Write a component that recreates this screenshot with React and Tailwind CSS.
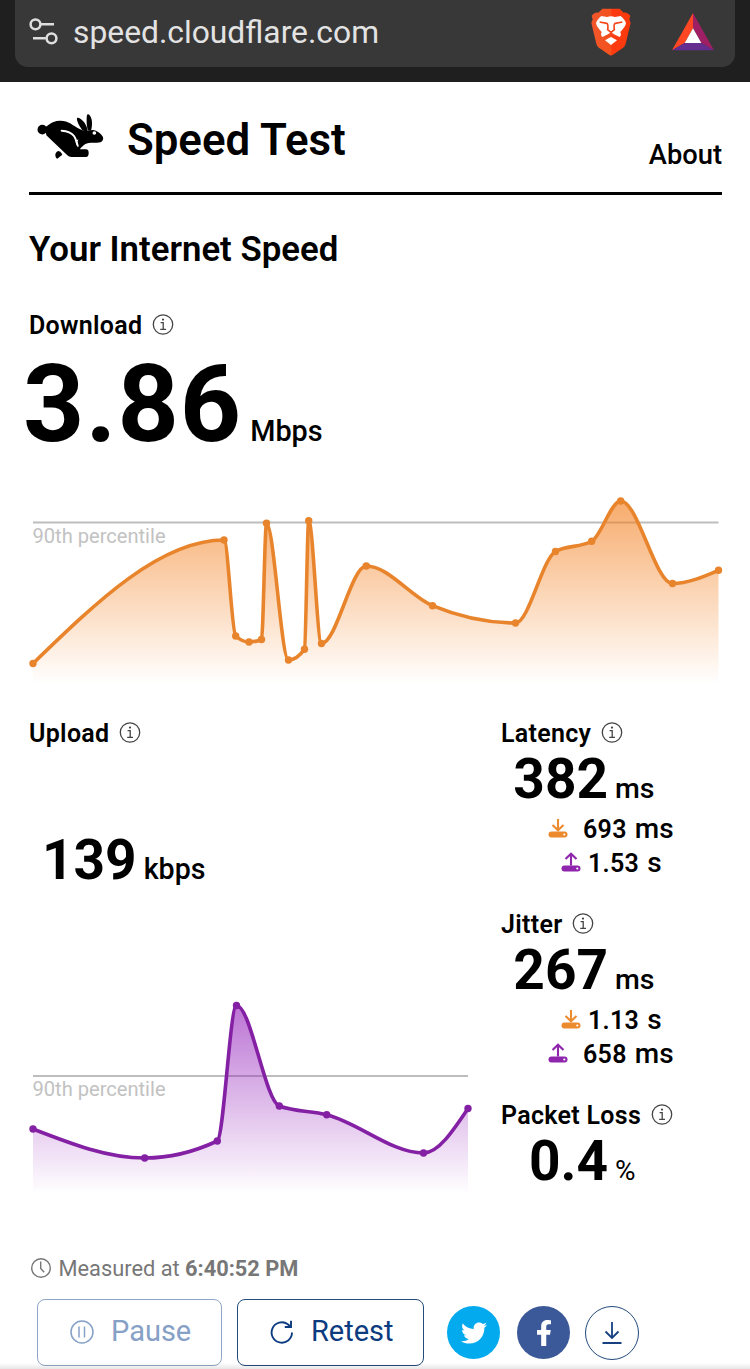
import React from "react";
import { FaFacebookF, FaTwitter } from "react-icons/fa";

const downloadPoints = [
  [33, 183.5],
  [224, 60],
  [235.7, 156],
  [249, 162],
  [261.5, 159.5],
  [266.5, 43.3],
  [288.5, 180],
  [304.5, 169.3],
  [308.7, 40.7],
  [321.5, 163.5],
  [366.3, 86],
  [432.5, 125.7],
  [515.5, 143],
  [555.5, 71.5],
  [591.7, 61.3],
  [620.7, 21],
  [672.5, 103.5],
  [718.5, 90.3],
];

const uploadPoints = [
  [33, 139],
  [144.7, 168],
  [217.3, 151],
  [236.5, 15.5],
  [279.3, 116],
  [326.7, 124.7],
  [423.5, 163],
  [468, 118.5],
];

// Monotone cubic interpolation, keeps the peaks at the data points
const monotonePath = (points) => {
  const n = points.length;
  const slopes = [];
  for (let i = 0; i < n - 1; i++) {
    slopes.push(
      (points[i + 1][1] - points[i][1]) / (points[i + 1][0] - points[i][0])
    );
  }

  const tangents = new Array(n).fill(0);
  for (let i = 1; i < n - 1; i++) {
    const h0 = points[i][0] - points[i - 1][0];
    const h1 = points[i + 1][0] - points[i][0];
    const s0 = slopes[i - 1];
    const s1 = slopes[i];
    const p = (s0 * h1 + s1 * h0) / (h0 + h1);
    tangents[i] =
      (Math.sign(s0) + Math.sign(s1)) *
      Math.min(Math.abs(s0), Math.abs(s1), 0.5 * Math.abs(p));
  }
  tangents[0] = (3 * slopes[0] - tangents[1]) / 2;
  tangents[n - 1] = (3 * slopes[n - 2] - tangents[n - 2]) / 2;

  let d = `M${points[0][0]},${points[0][1]}`;
  for (let i = 0; i < n - 1; i++) {
    const [x0, y0] = points[i];
    const [x1, y1] = points[i + 1];
    const dx = (x1 - x0) / 3;
    d += `C${x0 + dx},${y0 + dx * tangents[i]} ${x1 - dx},${
      y1 - dx * tangents[i + 1]
    } ${x1},${y1}`;
  }
  return d;
};

const SpeedChart = ({ id, points, width, color, fill, top, percentile }) => {
  const line = monotonePath(points);
  const first = points[0][0];
  const last = points[points.length - 1][0];

  return (
    <svg
      width={width}
      height="210"
      viewBox={`29 0 ${width} 210`}
      className="block overflow-visible"
    >
      <defs>
        <linearGradient
          id={id}
          gradientUnits="userSpaceOnUse"
          x1="0"
          y1={top}
          x2="0"
          y2="204"
        >
          <stop offset="0" stopColor={fill} stopOpacity="0.66" />
          <stop offset="1" stopColor={fill} stopOpacity="0" />
        </linearGradient>
      </defs>
      <line
        x1={first}
        x2={last}
        y1={percentile}
        y2={percentile}
        stroke="#bdbdbd"
        strokeWidth="2"
      />
      <text
        x="32.5"
        y={percentile + 20}
        fill="#c2c2c2"
        className="text-[20.1px]"
      >
        90th percentile
      </text>
      <path d={`${line}L${last},204L${first},204Z`} fill={`url(#${id})`} />
      <path
        d={line}
        fill="none"
        stroke={color}
        strokeWidth="3.6"
        strokeLinejoin="round"
      />
      {points.map(([x, y]) => (
        <circle key={x} cx={x} cy={y} r="3.7" fill={color} />
      ))}
    </svg>
  );
};

const InfoIcon = () => (
  <svg
    width="22"
    height="22"
    viewBox="0 0.5 22 22"
    fill="none"
    stroke="#444"
    className="overflow-visible"
  >
    <circle cx="11" cy="11" r="9.7" strokeWidth="1.3" />
    <path d="M8.6 9.2h2.6v6.6M8.2 15.9h5.8" strokeWidth="1.3" />
    <circle cx="11" cy="6.1" r="1.1" fill="#444" stroke="none" />
  </svg>
);

const TransferIcon = ({ direction }) => {
  const color = direction === "down" ? "#ec8a2e" : "#8f24ad";
  return (
    <svg
      width="20"
      height="20"
      viewBox="0 0.5 20 20"
      fill="none"
      stroke={color}
      className="overflow-visible"
    >
      <path
        d={
          direction === "down"
            ? "M10 0.5v11M4.5 6.5l5.5 5.3 5.5-5.3"
            : "M10 13V1.5M4.5 6.6L10 1.2l5.5 5.4"
        }
        strokeWidth="2.1"
      />
      <rect x="0.5" y="13" width="19" height="6" rx="3" fill={color} stroke="none" />
      <circle cx="16.3" cy="16" r="1.1" fill="#fff" stroke="none" />
    </svg>
  );
};

const RabbitLogo = () => (
  <svg width="68" height="48" viewBox="36 25 204 144">
    <circle cx="52" cy="75" r="14.5" />
    <path d="M60 68C72 62 78 49 104 48C130 47 143 62 164 73L176 78L205 76C216 79 224 84 229 90C235 96 236 102 233 107C230 113 224 114 216 114L198 114C188 114 181 117 176 122L167 130L165 134L184 134C190 135 191 140 191 146C191 153 188 157 183 157L140 157C133 157 129 154 123 148L64 92Z" />
    <path d="M156 40C161 38 168 43 174 49C180 55 187 67 187 76C187 82 175 82 170 74C164 65 154 49 156 40Z" />
    <path d="M188 29C193 27 198 36 200 45C202 55 201 67 198 78L188 76C186 66 184 53 185 43C185 36 186 30 188 29Z" />
    <path d="M100 139L106 141C112 148 113 149 110 152L97 162C93 162 91 155 91 151C91 145 95 141 100 139Z" />
    <path
      d="M110 78C129 79 139 83 147 94C154 104 153 111 158 122"
      fill="none"
      stroke="#fff"
      strokeWidth="6"
      strokeLinecap="round"
    />
    <path
      d="M158 106C155 113 155 119 159 126"
      fill="none"
      stroke="#fff"
      strokeWidth="3"
      strokeLinecap="round"
    />
    <circle cx="208" cy="85" r="5.5" fill="#fff" />
  </svg>
);

const BraveLogo = () => (
  <svg width="40" height="48" viewBox="94 22 120 144">
    <defs>
      <linearGradient id="brave" x1="0" x2="1" y1="0" y2="0">
        <stop offset="0" stopColor="#f1562b" />
        <stop offset="0.5" stopColor="#f4511e" />
        <stop offset="0.52" stopColor="#ff3a12" />
        <stop offset="1" stopColor="#f93a0c" />
      </linearGradient>
    </defs>
    <path
      d="M128 24H180L192 36C198 34 204 36 212 45L209 56L213 67L198 129C196 136 193 139 188 143L160 162C156 165 152 165 148 162L120 143C115 139 112 136 110 129L95 67L99 56L96 45C104 36 110 34 116 36Z"
      fill="url(#brave)"
    />
    <path
      d="M125 46L142 49C150 46 158 46 166 49L183 46C190 52 196 59 199 67C198 75 193 82 182 94C185 101 184 106 180 109L167 103L156 96L154 95L152 96L141 103L128 109C124 106 123 101 126 94C115 82 110 75 109 67C112 59 118 52 125 46Z"
      fill="#fff"
    />
    <path d="M136 119L154 109L172 119L154 133Z" fill="#fff" />
    <path
      d="M120 64L141 68C147 71 145 79 144 87L154 95L164 87C163 79 161 71 167 68L188 64"
      fill="none"
      stroke="#f4471d"
      strokeWidth="5"
    />
    <path
      d="M154 93V102M137 108L154 101L171 108"
      fill="none"
      stroke="#f4471d"
      strokeWidth="4"
    />
  </svg>
);

const BatLogo = () => (
  <svg width="42" height="38" viewBox="0 0 126 114">
    <path d="M63 0L0 112L38 90L63 46Z" fill="#ff4724" />
    <path d="M63 0L126 112L88 90L63 46Z" fill="#9e1f63" />
    <path d="M0 112H126L88 90H38Z" fill="#662d91" />
    <path d="M63 46L88 90H38Z" fill="#fff" />
  </svg>
);

const SectionTitle = ({ title }) => (
  <div className="flex h-6 items-center gap-[9.5px] text-[25px] font-semibold">
    <span className="pt-[2px] tracking-[0.3px]">{title}</span>
    <InfoIcon />
  </div>
);

const metrics = [
  {
    title: "Latency",
    value: "382",
    unit: "ms",
    loaded: [
      { direction: "down", value: "693", unit: "ms" },
      { direction: "up", value: "1.53", unit: "s" },
    ],
  },
  {
    title: "Jitter",
    value: "267",
    unit: "ms",
    loaded: [
      { direction: "down", value: "1.13", unit: "s" },
      { direction: "up", value: "658", unit: "ms" },
    ],
  },
  { title: "Packet Loss", value: "0.4", unit: "%", loaded: [] },
];

const Metric = ({ metric }) => (
  <div className="h-[159px]">
    <SectionTitle title={metric.title} />
    <div className="mt-[6px] flex h-[56px] items-baseline leading-[56px]">
      <span className="w-[107px] text-right text-[55px] font-bold">
        {metric.value}
      </span>
      <span
        className={
          metric.unit === "%"
            ? "ml-[7px] text-[28px]"
            : "ml-[7px] text-[28.5px] font-medium"
        }
      >
        {metric.unit}
      </span>
    </div>
    <div className="mt-[5px]">
      {metric.loaded.map((item) => (
        <div
          key={item.direction}
          className={`flex h-[34px] items-center ${
            item.unit === "s" ? "pl-[60px]" : "pl-[47px]"
          }`}
        >
          <TransferIcon direction={item.direction} />
          <div
            className={`flex h-[34px] items-baseline gap-[8px] leading-[34px] ${
              item.unit === "s" ? "pl-[7px]" : "pl-[15px]"
            }`}
          >
            <span className="text-[25px] font-semibold tracking-[0.3px]">
              {item.value}
            </span>
            <span className="text-[28px] font-medium">{item.unit}</span>
          </div>
        </div>
      ))}
    </div>
  </div>
);

const App = () => {
  return (
    <div className="relative h-[1369px] w-[750px] overflow-hidden bg-white font-['Roboto',sans-serif] text-black">
      {/* Browser bar */}
      <div className="h-[82px] bg-[#1f1f1f] px-[15px]">
        <div className="flex h-[67px] items-center rounded-b-[13px] bg-[#383838] pr-[21px] pb-[4px] pl-[14px]">
          <svg
            width="30"
            height="28"
            viewBox="0 0 30 28"
            fill="none"
            stroke="#dedede"
            strokeWidth="2.5"
          >
            <circle cx="6.5" cy="6.3" r="4.9" />
            <path d="M11.4 6.3H25M4 20.3h12.8" />
            <circle cx="22.5" cy="20.3" r="4.9" />
          </svg>
          <span className="ml-[14px] grow text-[31.8px] leading-[40px] text-[#e3e3e3]">
            speed.cloudflare.com
          </span>
          <BraveLogo />
          <div className="ml-[41px]">
            <BatLogo />
          </div>
        </div>
      </div>

      <main className="pr-[28px] pl-[29px]">
        {/* Header */}
        <header className="flex h-[113px] items-center border-b-[3.5px] border-black">
          <div className="ml-[8px]">
            <RabbitLogo />
          </div>
          <h1 className="ml-[22px] grow pt-[6px] text-[43.8px] leading-[50px] font-semibold">
            Speed Test
          </h1>
          <span className="pt-[35px] text-[27.3px] leading-[32px] font-medium">
            About
          </span>
        </header>

        {/* Download */}
        <h2 className="mt-[37px] text-[34.8px] leading-[34px] font-semibold">
          Your Internet Speed
        </h2>
        <div className="mt-[47px]">
          <SectionTitle title="Download" />
        </div>
        <div className="-ml-[6px] mt-[28px] flex h-[79px] items-baseline leading-[80px]">
          <span className="text-[107px] font-bold tracking-[1px]">3.86</span>
          <span className="ml-[8px] text-[28.8px] font-medium">Mbps</span>
        </div>
        <div className="mt-[36px]">
          <SpeedChart
            id="download-fill"
            points={downloadPoints}
            width={693}
            color="#e8842c"
            fill="#f38020"
            top={20}
            percentile={42.5}
          />
        </div>

        <div className="mt-[31px] flex">
          {/* Upload */}
          <div className="w-[472px]">
            <SectionTitle title="Upload" />
            <div className="mt-[87px] flex h-[56px] items-baseline pl-[13px] leading-[56px]">
              <span className="text-[55px] font-bold">139</span>
              <span className="ml-[7px] text-[28.6px] font-medium">kbps</span>
            </div>
            <div className="mt-[102px]">
              <SpeedChart
                id="upload-fill"
                points={uploadPoints}
                width={443}
                color="#8420a4"
                fill="#9728bd"
                top={12}
                percentile={86}
              />
            </div>
          </div>

          {/* Latency, jitter, packet loss */}
          <div className="flex h-[479px] flex-col gap-[32px]">
            {metrics.map((metric) => (
              <Metric key={metric.title} metric={metric} />
            ))}
          </div>
        </div>

        <div className="mt-[56px] flex h-6 items-center text-[21.8px] text-[#777]">
          <svg
            width="22"
            height="22"
            viewBox="0 0 22 22"
            fill="none"
            stroke="#777"
            strokeWidth="1.4"
            className="ml-px"
          >
            <circle cx="11" cy="11" r="9.3" />
            <path d="M10.7 4.5v7l3.5 3.7" />
          </svg>
          <span className="ml-[6.5px] pt-[2px]">
            Measured at <b className="font-bold">6:40:52 PM</b>
          </span>
        </div>

        {/* Actions */}
        <div className="mt-[19px] flex items-center pl-[8px] text-[29px]">
          <button className="flex h-[67px] w-[185px] items-center rounded-[8px] border-[1.5px] border-[#8fa6c4] pb-[2px] pl-[32px] text-[#86a0c6]">
            <svg
              width="24"
              height="24"
              viewBox="0 0 24 24"
              fill="none"
              stroke="currentColor"
              strokeWidth="1.5"
            >
              <circle cx="12" cy="12" r="11" />
              <path d="M9 6.5v11M14.5 6.5v11" />
            </svg>
            <span className="ml-[17px]">Pause</span>
          </button>
          <button className="ml-[15px] flex h-[67px] w-[187px] items-center rounded-[8px] border-[1.5px] border-[#23497d] pb-[2px] pl-[32px] text-[#0d3b80]">
            <svg
              width="24"
              height="24"
              viewBox="0 0 24 24"
              fill="none"
              stroke="currentColor"
              strokeWidth="1.9"
            >
              <path d="M22 12.5A10.2 10.2 0 1 1 17.8 4.2L21 7" />
              <path d="M21 0.8V7H14.8" />
            </svg>
            <span className="ml-[17px]">Retest</span>
          </button>
          <div className="ml-[23px] flex size-[53px] items-center justify-center rounded-full bg-[#04aaee] text-white">
            <FaTwitter size={26} />
          </div>
          <div className="ml-[17px] flex size-[53px] items-center justify-center rounded-full bg-[#3b5998] text-white">
            <FaFacebookF size={26} />
          </div>
          <div className="ml-[15px] flex size-[54px] items-center justify-center rounded-full border-[1.5px] border-[#23497d]">
            <svg
              width="20"
              height="24"
              viewBox="0 0 20 24"
              fill="none"
              stroke="#16407f"
              strokeWidth="1.8"
            >
              <path d="M10 1v16M3.5 10.5L10 17l6.500-6.500M0.500 22h19" />
            </svg>
          </div>
        </div>
      </main>

      <div className="absolute inset-x-0 bottom-0 h-[6px] bg-gradient-to-b from-transparent to-black/10" />
    </div>
  );
};

export default App;
